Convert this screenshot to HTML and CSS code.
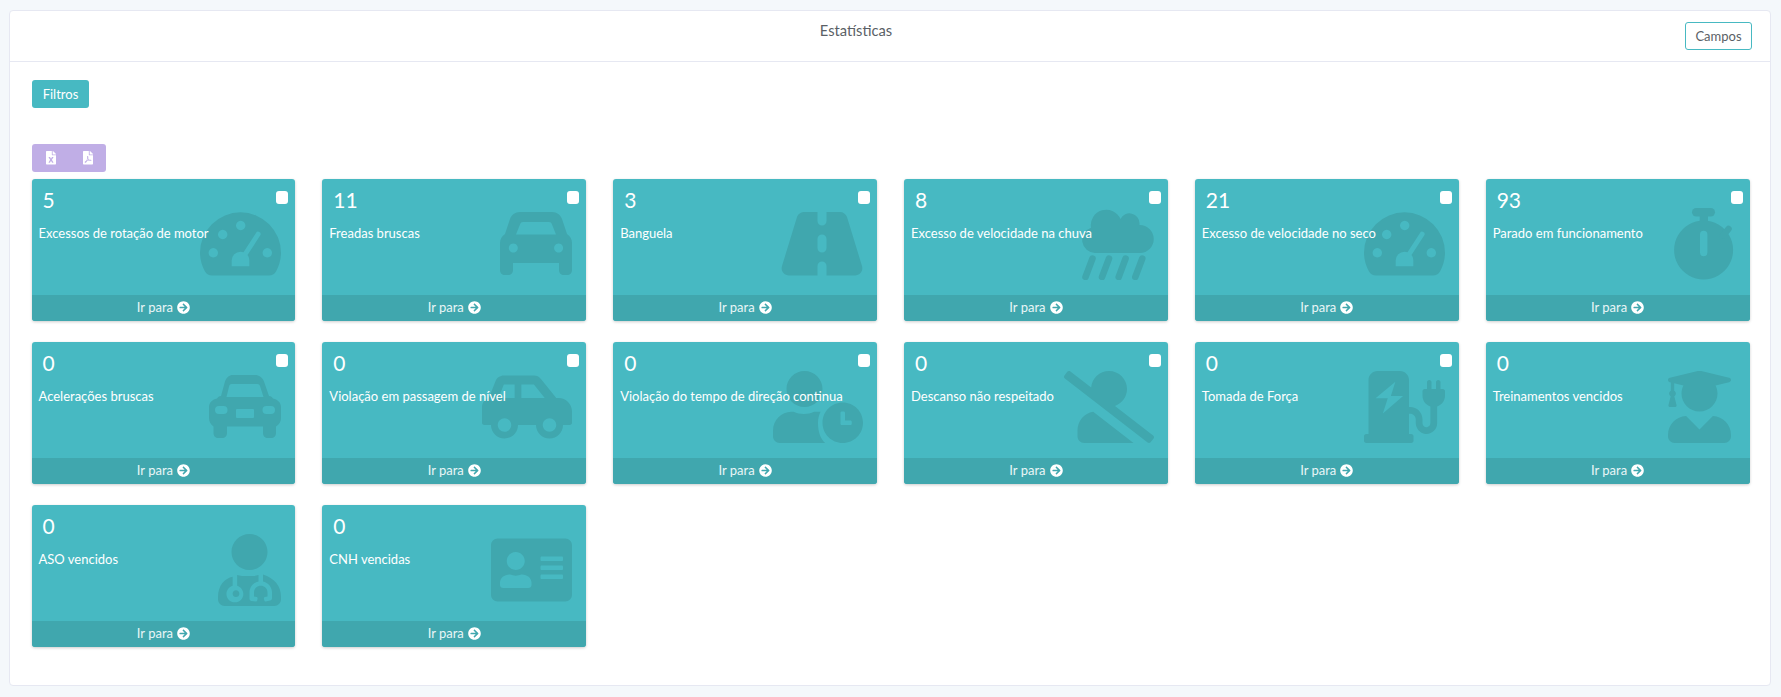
FILE: index.html
```html
<!DOCTYPE html>
<html lang="pt-br">
<head>
    <meta charset="UTF-8">
    <meta name="viewport" content="width=device-width, initial-scale=1.0">
    <title>Estatísticas</title>
    <link rel="stylesheet" href="styles.css">
</head>
<body>
    <!-- Ícones usados nos cards -->
    <svg class="icon-defs" aria-hidden="true">
        <defs>
            <path id="i-arrow" d="M256 8c137 0 248 111 248 248S393 504 256 504 8 393 8 256 119 8 256 8zm-28.9 143.6l75.5 72.4H120c-13.3 0-24 10.7-24 24v16c0 13.3 10.7 24 24 24h182.6l-75.5 72.4c-9.7 9.3-9.9 24.8-.4 34.3l11 10.9c9.4 9.4 24.6 9.4 33.9 0L404.3 273c9.4-9.4 9.4-24.6 0-33.9L271.6 106.3c-9.4-9.4-24.6-9.4-33.9 0l-11 11c-9.4 9.5-9.2 25 .4 34.3z"/>
            <path id="i-gauge" fill-rule="evenodd" d="M40.5 4.3A40.5 40.5 0 0 1 81 44.8C81 52 79 58 76 63.5 74.5 66 72 67.5 69 67.5H12C9 67.5 6.500 66 5 63.500 2 58 0 52 0 44.800A40.500 40.500 0 0 1 40.500 4.300ZM13.300 40.100a4.700 4.700 0 1 0 .01 0ZM22.700 21.800a4.700 4.700 0 1 0 .01 0ZM40.700 12.800a4.700 4.700 0 1 0 .01 0ZM67.300 40.100a4.700 4.700 0 1 0 .01 0ZM31.700 58.200V52.500A8.800 8.800 0 0 1 40.500 43.700C41.500 43.700 42.500 43.900 43.500 44.200L56 25A2.400 2.400 0 0 1 60.300 27.300L47.500 47C48.700 48.500 49.300 50.500 49.300 52.500V58.200Z"/>
        </defs>
    </svg>

    <div class="panel">
        <header class="panel-header">
            <h1 class="panel-title">Estatísticas</h1>
            <button class="btn-outline" type="button">Campos</button>
        </header>

        <div class="panel-body">
            <button class="btn-filter" type="button">Filtros</button>

            <div class="export-group">
                <button class="btn-export" type="button" aria-label="Excel">
                    <svg viewBox="0 0 384 512"><path d="M224 136V0H24C10.700 0 0 10.700 0 24v464c0 13.300 10.700 24 24 24h336c13.300 0 24-10.700 24-24V160H248c-13.200 0-24-10.800-24-24zm60.100 106.500L224 336l60.100 93.500c5.100 8-.6 18.500-10.100 18.500h-34.900c-4.400 0-8.500-2.400-10.600-6.300C208.900 405.500 192 373 192 373c-6.400 14.800-10 20-36.600 68.800-2.100 3.900-6.100 6.300-10.500 6.300H110c-9.500 0-15.200-10.500-10.100-18.500l60.300-93.500-60.300-93.500c-5.200-8 .6-18.500 10.100-18.500h34.800c4.400 0 8.500 2.400 10.600 6.300 26.100 48.800 20 33.600 36.600 68.500 0 0 6.100-11.700 36.600-68.500 2.100-3.900 6.200-6.300 10.600-6.300H274c9.500-.1 15.200 10.400 10.100 18.400zM384 121.900v6.100H256V0h6.100c6.400 0 12.500 2.500 17 7l97.900 98c4.500 4.500 7 10.600 7 16.900z"/></svg>
                </button>
                <button class="btn-export" type="button" aria-label="PDF">
                    <svg viewBox="0 0 384 512"><path d="M181.900 256.100c-5-16-4.900-46.900-2-46.900 8.400 0 7.600 36.900 2 46.900zm-1.700 47.200c-7.700 20.200-17.300 43.300-28.400 62.700 18.300-7 39-17.200 62.900-21.900-12.700-9.600-24.900-23.400-34.500-40.800zM86.100 428.100c0 .8 13.200-5.400 34.900-40.200-6.700 6.300-29.100 24.500-34.900 40.200zM248 160h136v328c0 13.300-10.700 24-24 24H24c-13.300 0-24-10.700-24-24V24C0 10.700 10.700 0 24 0h200v136c0 13.200 10.800 24 24 24zm-8 171.800c-20-12.200-33.300-29-42.700-53.800 4.500-18.500 11.600-46.600 6.200-64.200-4.700-29.400-42.400-26.500-47.800-6.800-5 18.300-.4 44.100 8.100 77-11.600 27.600-28.700 64.600-40.800 85.800-.1 0-.1.1-.2.1-27.100 13.900-73.600 44.500-54.500 68 5.600 6.900 16 10 21.500 10 17.900 0 35.700-18 61.100-61.800 25.800-8.500 54.100-19.100 79-23.200 21.700 11.800 47.100 19.500 64 19.500 29.200 0 31.200-32 19.700-43.400-13.900-13.600-54.300-9.700-73.600-7.200zM377 105L279 7c-4.500-4.500-10.600-7-17-7h-6v128h128v-6.100c0-6.300-2.500-12.400-7-16.900zm-74.100 255.300c4.100-2.700-2.500-11.900-42.800-9 37.100 15.800 42.800 9 42.800 9z"/></svg>
                </button>
            </div>

            <div class="cards">
                <div class="card">
                    <svg class="card-icon" viewBox="0 0 81 72"><use href="#i-gauge"/></svg>
                    <input class="card-check" type="checkbox">
                    <div class="card-body">
                        <div class="card-number">5</div>
                        <div class="card-label">Excessos de rotação de motor</div>
                    </div>
                    <a class="card-footer">Ir para <svg viewBox="0 0 512 512"><use href="#i-arrow"/></svg></a>
                </div>

                <div class="card">
                    <svg class="card-icon" viewBox="0 0 72 72"><path fill-rule="evenodd" d="M20 4H52C57 4 60.500 7 62 11L67 26C70 28 72 31 72 35V62C72 65 70 67 67 67H64C61 67 59 65 59 62V55H13V62C13 65 11 67 8 67H5C2 67 0 65 0 62V35C0 31 2 28 5 26L10 11C11.500 7 15 4 20 4ZM23 14C21.500 14 20.600 14.800 20.200 16L16 26.500H56L51.800 16C51.400 14.800 50.500 14 49 14ZM13.300 35.500a4.500 4.500 0 1 0 .01 0ZM58.600 35.500a4.500 4.500 0 1 0 .01 0Z"/></svg>
                    <input class="card-check" type="checkbox">
                    <div class="card-body">
                        <div class="card-number">11</div>
                        <div class="card-label">Freadas bruscas</div>
                    </div>
                    <a class="card-footer">Ir para <svg viewBox="0 0 512 512"><use href="#i-arrow"/></svg></a>
                </div>

                <div class="card">
                    <svg class="card-icon" viewBox="0 0 82 72"><path fill-rule="evenodd" d="M24 4H36.500V13a4.500 4.500 0 0 0 9 0V4H59C62 4 65 6 66 9L81 58C82.500 63 79 67.500 74 67.500H45.500V58a4.500 4.500 0 0 0-9 0V67.500H8C3 67.500-.5 63 1 58L16 9C17 6 20 4 24 4ZM36.500 31a4.500 4.500 0 0 1 9 0V40a4.500 4.500 0 0 1-9 0Z"/></svg>
                    <input class="card-check" type="checkbox">
                    <div class="card-body">
                        <div class="card-number">3</div>
                        <div class="card-label">Banguela</div>
                    </div>
                    <a class="card-footer">Ir para <svg viewBox="0 0 512 512"><use href="#i-arrow"/></svg></a>
                </div>

                <div class="card">
                    <svg class="card-icon" viewBox="0 0 72 72">
                        <path d="M13 45A13 13 0 0 1 9 19.700 15.500 15.500 0 0 1 38.500 11 10 10 0 0 1 57.500 15.500V17A14 14 0 0 1 58 45Z"/>
                        <path class="icon-line" d="M10.500 50.500L3.500 69M27 50.500L20 69M43.600 50.500L36.700 69M60.300 50.500L53.300 69"/>
                    </svg>
                    <input class="card-check" type="checkbox">
                    <div class="card-body">
                        <div class="card-number">8</div>
                        <div class="card-label">Excesso de velocidade na chuva</div>
                    </div>
                    <a class="card-footer">Ir para <svg viewBox="0 0 512 512"><use href="#i-arrow"/></svg></a>
                </div>

                <div class="card">
                    <svg class="card-icon" viewBox="0 0 81 72"><use href="#i-gauge"/></svg>
                    <input class="card-check" type="checkbox">
                    <div class="card-body">
                        <div class="card-number">21</div>
                        <div class="card-label">Excesso de velocidade no seco</div>
                    </div>
                    <a class="card-footer">Ir para <svg viewBox="0 0 512 512"><use href="#i-arrow"/></svg></a>
                </div>

                <div class="card">
                    <svg class="card-icon" viewBox="-2 0 63 72">
                        <path fill-rule="evenodd" d="M28.600 12.500a29.500 29.500 0 1 0 .01 0ZM25 26.500V44.500a3.700 3.700 0 0 0 7.400 0V26.500a3.700 3.700 0 0 0-7.400 0Z"/>
                        <rect x="17" y="0" width="23" height="8.500" rx="4.200"/>
                        <rect x="24.700" y="8" width="8.300" height="6"/>
                        <path class="icon-line" d="M48 27.500L53.500 21"/>
                    </svg>
                    <input class="card-check" type="checkbox">
                    <div class="card-body">
                        <div class="card-number">93</div>
                        <div class="card-label">Parado em funcionamento</div>
                    </div>
                    <a class="card-footer">Ir para <svg viewBox="0 0 512 512"><use href="#i-arrow"/></svg></a>
                </div>

                <div class="card">
                    <svg class="card-icon" viewBox="0 0 72 72"><path fill-rule="evenodd" d="M24 4H46C50 4 53.500 6.500 55 10.500L60 25C62 25 63 26 64 27.500 68.500 28.500 72 31.500 72 36V47C72 50.500 70.500 53.500 67 55.500V62C67 65 65 67 62 67H59C56 67 54 65 54 62V55.500H18V62C18 65 16 67 13 67H9.500C6.500 67 4.500 65 4.500 62V55.500C1.500 53.500 0 50.500 0 47V36C0 31.500 3.500 28.500 8 27.500 9 26 10 25 12 25L16 10.500C17.500 6.500 20 4 24 4ZM22.500 13C21.500 13 20.500 13.700 20.200 15L17.500 26H54.500L51 15C50.700 13.700 49.700 13 48.500 13ZM10 35H14.500A4 4 0 0 1 14.500 43H10A4 4 0 0 1 10 35ZM57.500 35H62A4 4 0 0 1 62 43H57.500A4 4 0 0 1 57.500 35ZM28 38H44A1 1 0 0 1 45 39V46A1 1 0 0 1 44 47H28A1 1 0 0 1 27 46V39A1 1 0 0 1 28 38Z"/></svg>
                    <input class="card-check" type="checkbox">
                    <div class="card-body">
                        <div class="card-number">0</div>
                        <div class="card-label">Acelerações bruscas</div>
                    </div>
                    <a class="card-footer">Ir para <svg viewBox="0 0 512 512"><use href="#i-arrow"/></svg></a>
                </div>

                <div class="card">
                    <svg class="card-icon" viewBox="0 0 640 512"><path d="M544 192h-16L419.220 56.020A64.025 64.025 0 0 0 369.240 32H155.330c-26.170 0-49.700 15.930-59.420 40.230L48 194.260C20.440 201.400 0 226.210 0 256v112c0 8.840 7.160 16 16 16h48c0 53.020 42.980 96 96 96s96-42.980 96-96h128c0 53.020 42.980 96 96 96s96-42.980 96-96h48c8.840 0 16-7.160 16-16v-80c0-53.020-42.980-96-96-96zM160 432c-26.470 0-48-21.530-48-48s21.530-48 48-48 48 21.530 48 48-21.530 48-48 48zm72-240H116.930l38.400-96H232v96zm48 0V96h89.240l76.800 96H280zm200 240c-26.470 0-48-21.530-48-48s21.530-48 48-48 48 21.530 48 48-21.530 48-48 48z"/></svg>
                    <input class="card-check" type="checkbox">
                    <div class="card-body">
                        <div class="card-number">0</div>
                        <div class="card-label">Violação em passagem de nível</div>
                    </div>
                    <a class="card-footer">Ir para <svg viewBox="0 0 512 512"><use href="#i-arrow"/></svg></a>
                </div>

                <div class="card">
                    <svg class="card-icon" viewBox="0 0 640 512"><path d="M496 224c-79.600 0-144 64.400-144 144s64.400 144 144 144 144-64.400 144-144-64.400-144-144-144zm64 150.300c0 5.300-4.400 9.700-9.700 9.700h-60.600c-5.300 0-9.700-4.400-9.700-9.700v-76.600c0-5.300 4.400-9.700 9.700-9.700h12.600c5.300 0 9.700 4.400 9.700 9.700V352h38.300c5.300 0 9.700 4.400 9.700 9.700v12.600zM320 368c0-27.800 6.700-54.100 18.200-77.500-1.300-.1-2.600-.5-3.900-.5h-41.800c-22.200 10.200-46.900 16-72.900 16s-50.600-5.800-72.900-16h-16.700C60.200 290 0 350.200 0 424.400V464c0 26.500 21.500 48 48 48h323.200c-30.800-28.300-51.200-71.200-51.200-144zM224 256c70.700 0 128-57.300 128-128S294.700 0 224 0 96 57.300 96 128s57.300 128 128 128z"/></svg>
                    <input class="card-check" type="checkbox">
                    <div class="card-body">
                        <div class="card-number">0</div>
                        <div class="card-label">Violação do tempo de direção continua</div>
                    </div>
                    <a class="card-footer">Ir para <svg viewBox="0 0 512 512"><use href="#i-arrow"/></svg></a>
                </div>

                <div class="card">
                    <svg class="card-icon" viewBox="0 0 640 512"><path d="M633.800 458.100L362.300 248.300C412.100 230.700 448 183.800 448 128 448 57.300 390.700 0 320 0c-67.100 0-121.500 51.800-126.900 117.400L45.500 3.400C38.500-2 28.500-.8 23 6.200L3.400 31.400c-5.400 7-4.200 17 2.800 22.400l588.400 454.700c7 5.400 17 4.200 22.500-2.800l19.600-25.300c5.400-6.800 4.100-16.900-2.900-22.300zM96 422.400V464c0 26.500 21.500 48 48 48h350.200L207.400 290.300C144.200 301.300 96 356 96 422.400z"/></svg>
                    <input class="card-check" type="checkbox">
                    <div class="card-body">
                        <div class="card-number">0</div>
                        <div class="card-label">Descanso não respeitado</div>
                    </div>
                    <a class="card-footer">Ir para <svg viewBox="0 0 512 512"><use href="#i-arrow"/></svg></a>
                </div>

                <div class="card">
                    <svg class="card-icon" viewBox="0 0 576 512"><path fill-rule="evenodd" d="M336 448H16c-8.840 0-16 7.160-16 16v32c0 8.840 7.160 16 16 16h320c8.840 0 16-7.160 16-16v-32c0-8.840-7.160-16-16-16zm208-320V80c0-8.840-7.160-16-16-16s-16 7.160-16 16v48h-32V80c0-8.840-7.160-16-16-16s-16 7.160-16 16v48h-16c-8.840 0-16 7.160-16 16v32c0 35.760 23.620 65.690 56 75.930v118.490c0 13.950-9.500 26.920-23.260 29.190C431.220 402.500 416 388.990 416 372v-28c0-48.600-39.400-88-88-88h-8V64c0-35.350-28.650-64-64-64H96C60.650 0 32 28.650 32 64v384h288V304h8c22.090 0 40 17.910 40 40v24.610c0 39.670 28.920 75.160 68.410 79.010C481.710 452.050 520 416.410 520 372V251.930c32.380-10.240 56-40.170 56-75.930v-32c0-8.840-7.160-16-16-16h-16zM223 76L82 194H169L134 303L278 178H191Z"/></svg>
                    <input class="card-check" type="checkbox">
                    <div class="card-body">
                        <div class="card-number">0</div>
                        <div class="card-label">Tomada de Força</div>
                    </div>
                    <a class="card-footer">Ir para <svg viewBox="0 0 512 512"><use href="#i-arrow"/></svg></a>
                </div>

                <div class="card">
                    <svg class="card-icon card-icon-inset" viewBox="0 0 448 512"><path d="M319.400 320.600L224 416l-95.400-95.400C57.100 323.700 0 382.200 0 454.400v9.600c0 26.500 21.500 48 48 48h352c26.500 0 48-21.500 48-48v-9.600c0-72.200-57.100-130.700-128.600-133.800zM13.600 79.800l6.400 1.500v58.400c-7 4.200-12 11.500-12 20.300 0 8.400 4.600 15.400 11.100 19.700L3.500 242c-1.700 6.900 2.100 14 7.600 14h41.800c5.500 0 9.300-7.100 7.600-14l-15.600-62.300C51.400 175.400 56 168.400 56 160c0-8.800-5-16.100-12-20.300V87.100l66 15.900c-8.600 17.200-14 36.400-14 57 0 70.700 57.300 128 128 128s128-57.300 128-128c0-20.600-5.300-39.800-14-57l96.300-23.200c18.200-4.400 18.200-27.100 0-31.500l-190.400-46c-13-3.100-26.700-3.100-39.700 0L13.600 48.200c-18.100 4.400-18.100 27.200 0 31.600z"/></svg>
                    <div class="card-body">
                        <div class="card-number">0</div>
                        <div class="card-label">Treinamentos vencidos</div>
                    </div>
                    <a class="card-footer">Ir para <svg viewBox="0 0 512 512"><use href="#i-arrow"/></svg></a>
                </div>

                <div class="card">
                    <svg class="card-icon" viewBox="0 0 448 512"><path d="M224 256c70.700 0 128-57.300 128-128S294.700 0 224 0 96 57.300 96 128s57.300 128 128 128zM104 424c0 13.300 10.700 24 24 24s24-10.700 24-24-10.700-24-24-24-24 10.700-24 24zm216-135.400v49c36.500 7.400 64 39.800 64 78.400v41.700c0 7.600-5.400 14.200-12.900 15.700l-32.200 6.400c-4.300.9-8.500-1.900-9.400-6.300l-3.100-15.700c-.9-4.300 1.900-8.600 6.300-9.400l19.300-3.900V416c0-62.800-96-65.100-96 1.900v26.700l19.300 3.900c4.300.9 7.100 5.100 6.300 9.400l-3.100 15.700c-.9 4.300-5.100 7.100-9.400 6.300l-31.200-4.200c-7.900-1.100-13.800-7.800-13.800-15.900V416c0-38.600 27.500-70.900 64-78.400v-45.200c-11 3.500-22.400 5.900-34.400 5.900h-83.200c-12 0-23.400-2.400-34.400-5.900v75.200c24.700 7.300 44 31.500 44 58.400 0 33.100-26.900 60-60 60s-60-26.900-60-60c0-26.900 19.300-51.100 44-58.400v-63.400C48.500 314.200 0 365.800 0 448v16c0 26.500 21.500 48 48 48h352c26.500 0 48-21.500 48-48v-16c0-82.200-48.500-133.800-128-159.400z"/></svg>
                    <div class="card-body">
                        <div class="card-number">0</div>
                        <div class="card-label">ASO vencidos</div>
                    </div>
                    <a class="card-footer">Ir para <svg viewBox="0 0 512 512"><use href="#i-arrow"/></svg></a>
                </div>

                <div class="card">
                    <svg class="card-icon" viewBox="0 0 576 512"><path d="M528 32H48C21.500 32 0 53.500 0 80v352c0 26.500 21.500 48 48 48h480c26.500 0 48-21.500 48-48V80c0-26.500-21.500-48-48-48zm-352 96c35.300 0 64 28.700 64 64s-28.700 64-64 64-64-28.700-64-64 28.700-64 64-64zm112 236.800c0 10.600-10 19.200-22.400 19.200H86.400C74 384 64 375.400 64 364.800v-19.200c0-31.800 30.100-57.600 67.200-57.600h5c12.300 5.100 25.700 8 39.800 8s27.600-2.900 39.800-8h5c37.100 0 67.200 25.800 67.200 57.600v19.200zM512 312c0 4.400-3.600 8-8 8H360c-4.400 0-8-3.600-8-8v-16c0-4.400 3.600-8 8-8h144c4.400 0 8 3.600 8 8v16zm0-64c0 4.400-3.600 8-8 8H360c-4.400 0-8-3.600-8-8v-16c0-4.400 3.600-8 8-8h144c4.400 0 8 3.600 8 8v16zm0-64c0 4.400-3.600 8-8 8H360c-4.400 0-8-3.600-8-8v-16c0-4.400 3.600-8 8-8h144c4.400 0 8 3.600 8 8v16z"/></svg>
                    <div class="card-body">
                        <div class="card-number">0</div>
                        <div class="card-label">CNH vencidas</div>
                    </div>
                    <a class="card-footer">Ir para <svg viewBox="0 0 512 512"><use href="#i-arrow"/></svg></a>
                </div>
            </div>
        </div>
    </div>
</body>
</html>
```

FILE: styles.css
```css
* {
    box-sizing: border-box;
}

html, body {
    height: 100%;
}

body {
    margin: 0;
    padding: 10px 10px 11px 9px;
    background-color: #f4f8fb;
    font-family: "Lato", "Noto Sans", sans-serif;
    font-size: 13px;
    color: #5a5f66;
}

.icon-defs {
    display: none;
}

.panel {
    height: 100%;
    background-color: #fff;
    border: 1px solid #e6e8f2;
    border-radius: 4px;
}

.panel-header {
    display: flex;
    align-items: flex-start;
    height: 51px;
    padding: 11px 18px 0 17px;
    border-bottom: 1px solid #e6e8f2;
}

.panel-title {
    flex: 1;
    margin: -1px 0 0;
    font-size: 14.700px;
    font-weight: 400;
    line-height: 18px;
    text-align: center;
    color: #5a5f66;
}

.btn-outline {
    width: 67px;
    height: 28px;
    padding: 0;
    background-color: #fff;
    border: 1px solid #47b9c2;
    border-radius: 3px;
    color: #5a5f66;
    font-family: inherit;
    font-size: 13px;
}

.panel-body {
    padding: 18px 20px 0 22px;
}

.btn-filter {
    display: block;
    width: 57px;
    height: 28px;
    padding: 0;
    background-color: #47b9c2;
    border: none;
    border-radius: 3px;
    color: #fff;
    font-family: inherit;
    font-size: 13px;
}

.export-group {
    display: flex;
    width: 74px;
    height: 28px;
    margin-top: 36px;
    background-color: #c0aee6;
    border-radius: 3px;
}

.btn-export {
    flex: 1;
    padding: 0;
    background: none;
    border: none;
}

.btn-export svg {
    display: block;
    width: 10px;
    height: 13.500px;
    margin: 0 auto;
    fill: #fff;
}

.cards {
    display: grid;
    grid-template-columns: repeat(6, 1fr);
    grid-auto-rows: 142px;
    gap: 21px 27px;
    margin: 7px 0.5px 0 -0.5px;
}

.card {
    position: relative;
    display: flex;
    flex-direction: column;
    background-color: #47b9c2;
    border-radius: 3px;
    box-shadow: 0 1px 3px rgba(0, 0, 0, 0.2);
    color: #fff;
    overflow: hidden;
}

.card-icon {
    position: absolute;
    top: 28.500px;
    right: 14px;
    height: 72px;
    fill: #40a7ae;
}

.card-icon-inset {
    right: 19px;
}

.icon-line {
    fill: none;
    stroke: #40a7ae;
    stroke-width: 6.500;
    stroke-linecap: round;
}

.card-check {
    appearance: none;
    position: absolute;
    top: 12px;
    right: 7px;
    width: 12px;
    height: 13px;
    margin: 0;
    background-color: #fff;
    border-radius: 3px;
}

.card-body {
    position: relative;
    flex: 1;
    padding: 8px 7px 0;
}

.card-number {
    padding-left: 4px;
    font-size: 21px;
    line-height: 26px;
}

.card-label {
    margin-top: 11px;
    font-size: 13px;
    line-height: 18px;
}

.card-footer {
    display: flex;
    align-items: center;
    justify-content: center;
    gap: 4px;
    height: 26px;
    padding-bottom: 2px;
    background-color: #40a7ae;
    font-size: 13px;
    color: #e9f6f7;
}

.card-footer svg {
    width: 13px;
    height: 13px;
    fill: #fff;
}
```
